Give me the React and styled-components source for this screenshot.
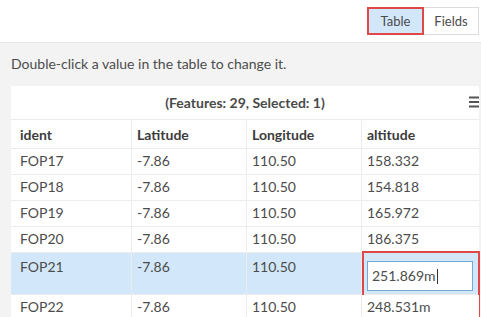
import React from "react";
import styled, { createGlobalStyle } from "styled-components";

const GlobalStyle = createGlobalStyle`
    html, body {
        margin: 0;
        padding: 0;
        background: #f3f3f3;
        overflow: hidden;
    }
    body {
        font-family: Lato, "Open Sans", sans-serif;
        color: #4c4c4c;
    }
`;

const Page = styled.div`
    width: 481px;
    height: 317px;
    overflow: hidden;
    display: flex;
    flex-direction: column;
`;

const TopBar = styled.div`
    height: 42px;
    flex-shrink: 0;
    background: #ffffff;
    border-bottom: 1px solid #e6e6e6;
    display: flex;
    justify-content: flex-end;
    align-items: center;
    padding-right: 2px;
`;

const SegButton = styled.div`
    height: 28px;
    box-sizing: border-box;
    width: ${(p) => (p.$active ? 57 : 55)}px;
    display: flex;
    justify-content: center;
    align-items: center;
    font-size: 13px;
    color: #4c4c4c;
    background: ${(p) => (p.$active ? "#d2e7fa" : "#ffffff")};
    border: ${(p) => (p.$active ? "2px solid #e04848" : "1px solid #dcdcdc")};
    border-left-width: ${(p) => (p.$active ? "2px" : "0")};
`;

const Hint = styled.div`
    padding: 12px 11px 0;
    height: 31px;
    flex-shrink: 0;
    font-size: 14px;
    line-height: 17px;
    color: #4c4c4c;
`;

const Panel = styled.div`
    margin-left: 11px;
    margin-right: 2px;
    background: #ffffff;
    flex-grow: 1;
`;

const PanelHeader = styled.div`
    height: 33px;
    display: grid;
    grid-template-columns: 1fr auto 1fr;
    align-items: center;
    border-bottom: 1px solid #ebebeb;
`;

const PanelTitle = styled.span`
    grid-column: 2;
    font-size: 14px;
    font-weight: 700;
    color: #4a4a4a;
`;

const MenuIcon = styled.svg`
    grid-column: 3;
    justify-self: end;
    margin-top: -2px;
`;

const Table = styled.div`
    display: grid;
    grid-template-columns: 120px 115px 115px 1fr;
`;

const HeadCell = styled.div`
    height: 29px;
    box-sizing: border-box;
    padding: 6px 0 0 ${(p) => (p.$first ? 9 : 5)}px;
    font-size: 14px;
    line-height: 17px;
    font-weight: 700;
    color: #3c3c3c;
    border-left: ${(p) => (p.$first ? "none" : "1px solid #ececec")};
    border-bottom: 1px solid #ececec;
`;

const Cell = styled.div`
    position: relative;
    height: ${(p) => (p.$tall ? 42 : 26)}px;
    box-sizing: border-box;
    padding: ${(p) => (p.$tall ? 5 : 3)}px 0 0 ${(p) => (p.$first ? 9 : 5)}px;
    font-size: 14px;
    line-height: 17px;
    color: #4c4c4c;
    background: ${(p) => (p.$selected ? "#d2e7f9" : "#ffffff")};
    border-left: ${(p) => (p.$first ? "none" : "1px solid #ececec")};
    border-bottom: 1px solid #ececec;
`;

const EditInput = styled.div`
    margin-top: 3px;
    margin-right: 6px;
    height: 30px;
    box-sizing: border-box;
    background: #ffffff;
    border: 1px solid #74a9dc;
    padding: 6px 0 0 4px;
    font-size: 14px;
    line-height: 16px;
    color: #4c4c4c;
`;

const Caret = styled.span`
    display: inline-block;
    width: 1px;
    height: 15px;
    margin-left: 1px;
    vertical-align: -3px;
    background: #333;
`;

const Annotation = styled.div`
    position: absolute;
    left: 0;
    top: -2px;
    width: 118px;
    height: 66px;
    box-sizing: border-box;
    border: 2px solid #e04848;
    pointer-events: none;
`;

const rows = [
    ["FOP17", "-7.86", "110.50", "158.332"],
    ["FOP18", "-7.86", "110.50", "154.818"],
    ["FOP19", "-7.86", "110.50", "165.972"],
    ["FOP20", "-7.86", "110.50", "186.375"],
    ["FOP21", "-7.86", "110.50", "251.869m", true],
    ["FOP22", "-7.86", "110.50", "248.531m"],
];

const columns = ["ident", "Latitude", "Longitude", "altitude"];

export default function App() {
    return (
        <Page>
            <GlobalStyle />
            <TopBar>
                <SegButton $active>Table</SegButton>
                <SegButton>Fields</SegButton>
            </TopBar>
            <Hint>Double-click a value in the table to change it.</Hint>
            <Panel>
                <PanelHeader>
                    <PanelTitle>(Features: 29, Selected: 1)</PanelTitle>
                    <MenuIcon width="10" height="12" viewBox="0 0 10 12">
                        <rect x="0" y="0.5" width="10" height="2" fill="#555" />
                        <rect x="0" y="5" width="10" height="2" fill="#555" />
                        <rect x="0" y="9.5" width="10" height="2" fill="#555" />
                    </MenuIcon>
                </PanelHeader>
                <Table>
                    {columns.map((c, i) => (
                        <HeadCell key={c} $first={i === 0}>
                            {c}
                        </HeadCell>
                    ))}
                    {rows.map(([a, b, c, d, editing]) => (
                        <React.Fragment key={a}>
                            <Cell $first $selected={editing} $tall={editing}>
                                {a}
                            </Cell>
                            <Cell $selected={editing} $tall={editing}>
                                {b}
                            </Cell>
                            <Cell $selected={editing} $tall={editing}>
                                {c}
                            </Cell>
                            <Cell $selected={editing} $tall={editing}>
                                {editing ? (
                                    <>
                                        <EditInput>
                                            {d}
                                            <Caret />
                                        </EditInput>
                                        <Annotation />
                                    </>
                                ) : (
                                    d
                                )}
                            </Cell>
                        </React.Fragment>
                    ))}
                </Table>
            </Panel>
        </Page>
    );
}
